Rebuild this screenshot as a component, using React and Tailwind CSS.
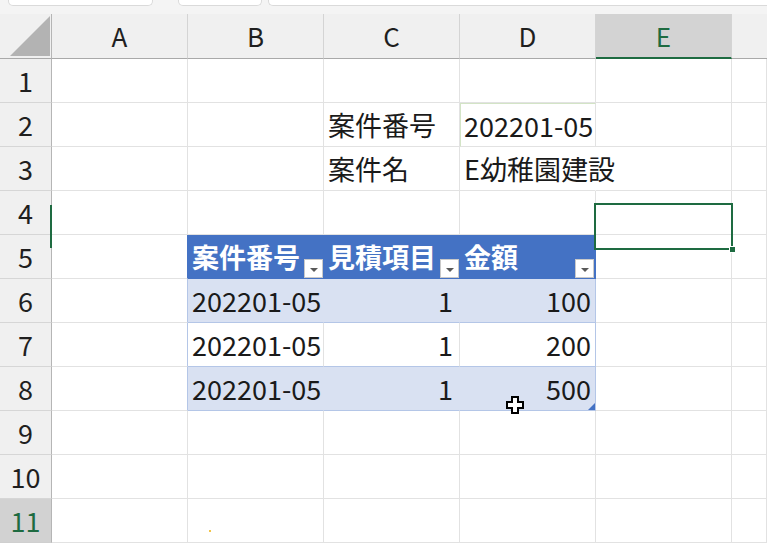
import React from "react";

const FONT = { fontFamily: '"Noto Sans CJK JP", "Noto Sans", sans-serif' };

function Dropdown({ right = "right-0" }) {
  return (
    <div className={"absolute bottom-0 w-[19px] h-[19px] bg-white border border-[#c9c9c9] flex items-center justify-center " + right}>
      <div className="w-0 h-0 border-l-[4px] border-r-[4px] border-t-[4px] border-l-transparent border-r-transparent border-t-[#595959] mt-[3px]" />
    </div>
  );
}

function RowHead({ n, active }) {
  return (
    <div
      className={
        "h-[44px] border-r border-b flex items-center justify-center text-[27px] leading-none " +
        (active
          ? "bg-[#d2d2d2] text-[#1e6b41] border-r-[#b5b5b5] border-b-[#cfcfcf]"
          : "bg-[#f0f0f0] text-[#1f1f1f] border-r-[#b5b5b5] border-b-[#d6d6d6]")
      }
    >
      {n}
    </div>
  );
}

function Cell({ className = "", children }) {
  return (
    <div
      className={
        "h-[44px] border-r border-b flex items-center pl-[4px] pr-[5px] text-[27px] leading-none whitespace-nowrap text-[#1a1a1a] " +
        className
      }
    >
      {children}
    </div>
  );
}

const plain = "bg-white border-r-[#e2e2e2] border-b-[#e2e2e2]";

function PlainRow({ n, active }) {
  return (
    <>
      <RowHead n={n} active={active} />
      <Cell className={plain} />
      <Cell className={plain} />
      <Cell className={plain} />
      <Cell className={plain} />
      <Cell className={plain} />
      <Cell className={plain} />
    </>
  );
}

function TableRow({ n, band, vals }) {
  const bg = band
    ? "bg-[#d9e1f2] border-r-[#d9e1f2] border-b-[#b4c6e7]"
    : "bg-white border-r-[#e2e2e2] border-b-[#b4c6e7]";
  const bgLast = band
    ? "bg-[#d9e1f2] border-r-[#b4c6e7] border-b-[#b4c6e7]"
    : "bg-white border-r-[#b4c6e7] border-b-[#b4c6e7]";
  return (
    <>
      <RowHead n={n} />
      <Cell className="bg-white border-r-[#b4c6e7] border-b-[#e2e2e2]" />
      <Cell className={bg}>{vals[0]}</Cell>
      <Cell className={bg + " justify-end !pr-[6px]"}>{vals[1]}</Cell>
      <Cell className={bgLast + " relative justify-end !pr-[4px]"}>
        {vals[2]}
        {n === 8 && (
          <svg className="absolute right-0 bottom-0" width="7" height="7" viewBox="0 0 7 7">
            <polygon points="7,0 7,7 0,7" fill="#4472c4" />
          </svg>
        )}
      </Cell>
      <Cell className={plain} />
      <Cell className={plain} />
    </>
  );
}

export default function App() {
  const colHead =
    "h-[45px] border-r border-b bg-[#f0f0f0] border-r-[#d4d4d4] border-b-[#a9a9a9] flex items-center justify-center text-[26px] leading-none text-[#1f1f1f]";
  const th =
    "relative bg-[#4472c4] border-r-[#4472c4] border-b-[#4472c4] text-white font-bold !pl-[4px]";
  return (
    <div className="relative w-[767px] h-[544px] overflow-hidden bg-white" style={FONT}>
      {/* top strip */}
      <div className="h-[14px] bg-[#f4f4f4] flex items-start">
        <div className="ml-[8px] w-[145px] h-[6px] bg-white border border-t-0 border-[#dadada] rounded-b-[5px]" />
        <div className="ml-[25px] w-[84px] h-[6px] bg-white border border-t-0 border-[#dadada] rounded-b-[5px]" />
        <div className="ml-[6px] flex-1 h-[6px] bg-white border border-t-0 border-r-0 border-[#dadada] rounded-bl-[5px]" />
      </div>

      <div className="grid grid-cols-[52px_136px_136px_136px_136px_136px_35px]">
        {/* header row */}
        <div className="h-[45px] bg-[#f0f0f0] border-r border-b border-r-[#b5b5b5] border-b-[#a9a9a9] flex items-end justify-end pr-[1px] pb-[2px]">
          <svg width="40" height="40" viewBox="0 0 40 40">
            <polygon points="40,0 40,40 0,40" fill="#b3b3b3" />
          </svg>
        </div>
        <div className={colHead}>A</div>
        <div className={colHead}>B</div>
        <div className={colHead}>C</div>
        <div className={colHead}>D</div>
        <div className="h-[45px] border-r border-b-2 bg-[#d3d3d3] border-r-[#d4d4d4] border-b-[#1e6b41] flex items-center justify-center text-[26px] leading-none text-[#1e6b41]">
          E
        </div>
        <div className="h-[45px] border-b bg-[#f0f0f0] border-b-[#a9a9a9]" />

        <PlainRow n={1} />

        {/* row 2 */}
        <RowHead n={2} />
        <Cell className={plain} />
        <Cell className={plain} />
        <Cell className={plain}>案件番号</Cell>
        <Cell className="relative z-10 bg-white border-r-[#e2e2e2] border-b-[#e2e2e2] border-t border-t-[#d3e4c6] border-l border-l-[#d3e4c6] !pl-[3px]">
          202201-05
        </Cell>
        <Cell className={plain} />
        <Cell className={plain} />

        {/* row 3 */}
        <RowHead n={3} />
        <Cell className={plain} />
        <Cell className={plain} />
        <Cell className={plain}>案件名</Cell>
        <Cell className="relative z-10 bg-white border-r-white border-b-[#e2e2e2]">E幼稚園建設</Cell>
        <Cell className={plain} />
        <Cell className={plain} />

        <PlainRow n={4} />

        {/* row 5 table header */}
        <RowHead n={5} />
        <Cell className="bg-white border-r-[#4472c4] border-b-[#e2e2e2]" />
        <Cell className={th}>
          案件番号
          <Dropdown />
        </Cell>
        <Cell className={th}>
          見積項目
          <Dropdown />
        </Cell>
        <Cell className={th}>
          金額
          <Dropdown right="right-[1px]" />
        </Cell>
        <Cell className={plain} />
        <Cell className={plain} />

        <TableRow n={6} band vals={["202201-05", "1", "100"]} />
        <TableRow n={7} band={false} vals={["202201-05", "1", "200"]} />
        <TableRow n={8} band vals={["202201-05", "1", "500"]} />

        <PlainRow n={9} />
        <PlainRow n={10} />
        <PlainRow n={11} active />
      </div>

      {/* overlays */}
      <div className="absolute z-20 left-[594px] top-[203px] w-[139px] h-[47px] border-2 border-[#1e6b41]">
        <div className="absolute -right-[5px] -bottom-[5px] w-[7px] h-[7px] bg-[#1e6b41] border border-white" />
      </div>
      <div className="absolute z-20 left-[50px] top-[205px] w-[2px] h-[43px] bg-[#1e6b41]" />

      <svg className="absolute z-20 left-[506px] top-[396px]" width="18" height="18" viewBox="0 0 18 18">
        <polygon
          points="6,1 12,1 12,6 17,6 17,12 12,12 12,17 6,17 6,12 1,12 1,6 6,6"
          fill="white"
          stroke="black"
          strokeWidth="2"
          strokeLinejoin="miter"
        />
      </svg>

      <div className="absolute left-[209px] top-[530px] w-[2px] h-[2px] bg-[#f2c54a]" />
    </div>
  );
}
